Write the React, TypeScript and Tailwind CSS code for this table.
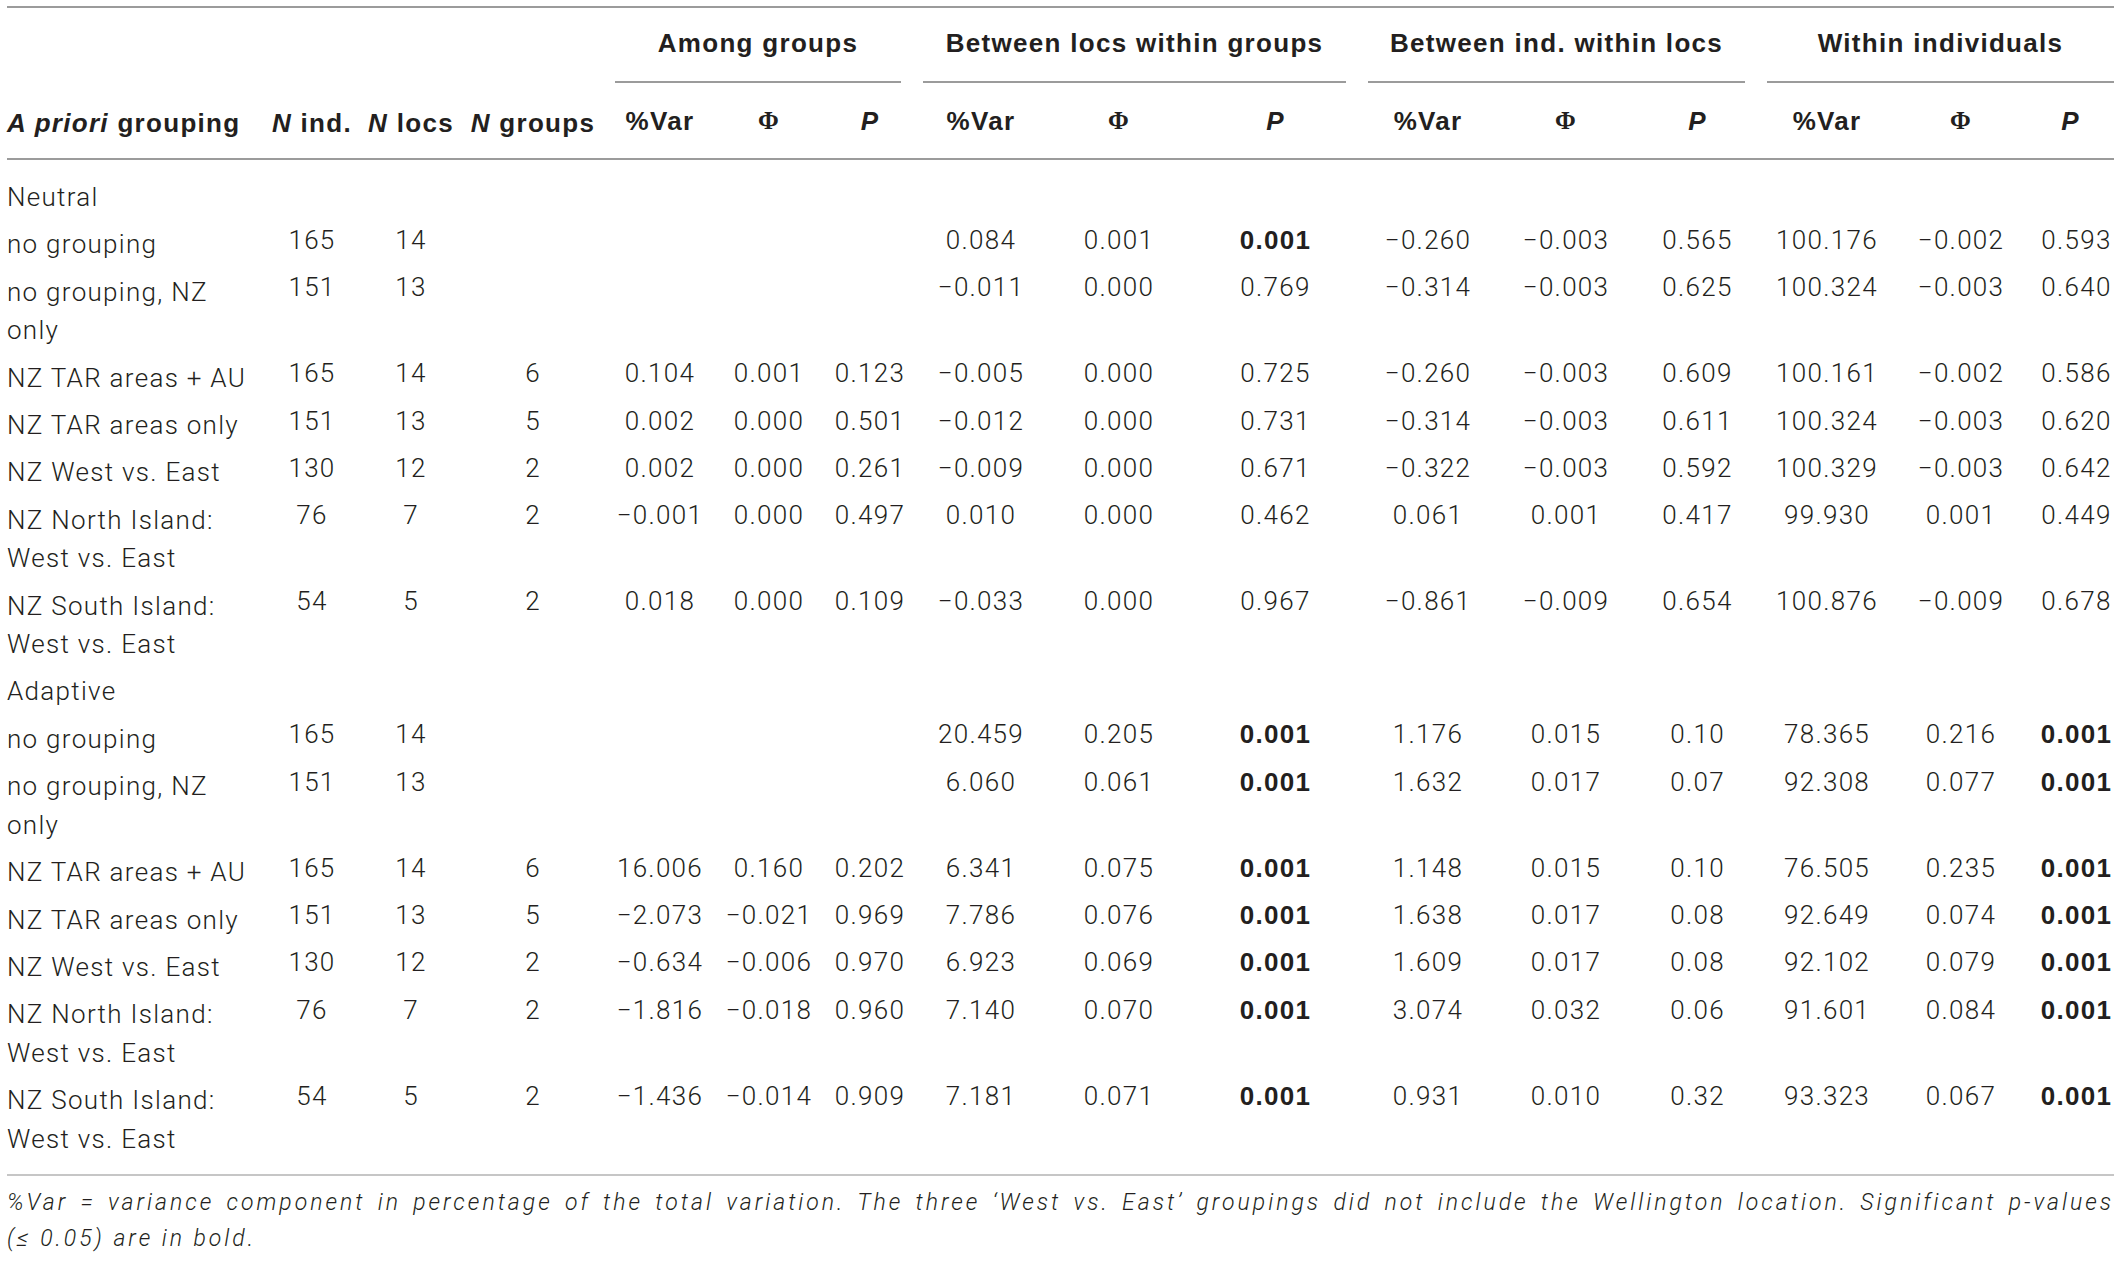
import React from 'react'

type Row = { label: React.ReactNode; cells: string[] }

// "*" in front of a value marks a significant (bold) p-value
const neutral: Row[] = [
  { label: 'no grouping', cells: ['165', '14', '', '', '', '', '0.084', '0.001', '*0.001', '−0.260', '−0.003', '0.565', '100.176', '−0.002', '0.593'] },
  { label: <>no grouping, NZ<br />only</>, cells: ['151', '13', '', '', '', '', '−0.011', '0.000', '0.769', '−0.314', '−0.003', '0.625', '100.324', '−0.003', '0.640'] },
  { label: 'NZ TAR areas + AU', cells: ['165', '14', '6', '0.104', '0.001', '0.123', '−0.005', '0.000', '0.725', '−0.260', '−0.003', '0.609', '100.161', '−0.002', '0.586'] },
  { label: 'NZ TAR areas only', cells: ['151', '13', '5', '0.002', '0.000', '0.501', '−0.012', '0.000', '0.731', '−0.314', '−0.003', '0.611', '100.324', '−0.003', '0.620'] },
  { label: 'NZ West vs. East', cells: ['130', '12', '2', '0.002', '0.000', '0.261', '−0.009', '0.000', '0.671', '−0.322', '−0.003', '0.592', '100.329', '−0.003', '0.642'] },
  { label: <>NZ North Island:<br />West vs. East</>, cells: ['76', '7', '2', '−0.001', '0.000', '0.497', '0.010', '0.000', '0.462', '0.061', '0.001', '0.417', '99.930', '0.001', '0.449'] },
  { label: <>NZ South Island:<br />West vs. East</>, cells: ['54', '5', '2', '0.018', '0.000', '0.109', '−0.033', '0.000', '0.967', '−0.861', '−0.009', '0.654', '100.876', '−0.009', '0.678'] },
]

const adaptive: Row[] = [
  { label: 'no grouping', cells: ['165', '14', '', '', '', '', '20.459', '0.205', '*0.001', '1.176', '0.015', '0.10', '78.365', '0.216', '*0.001'] },
  { label: <>no grouping, NZ<br />only</>, cells: ['151', '13', '', '', '', '', '6.060', '0.061', '*0.001', '1.632', '0.017', '0.07', '92.308', '0.077', '*0.001'] },
  { label: 'NZ TAR areas + AU', cells: ['165', '14', '6', '16.006', '0.160', '0.202', '6.341', '0.075', '*0.001', '1.148', '0.015', '0.10', '76.505', '0.235', '*0.001'] },
  { label: 'NZ TAR areas only', cells: ['151', '13', '5', '−2.073', '−0.021', '0.969', '7.786', '0.076', '*0.001', '1.638', '0.017', '0.08', '92.649', '0.074', '*0.001'] },
  { label: 'NZ West vs. East', cells: ['130', '12', '2', '−0.634', '−0.006', '0.970', '6.923', '0.069', '*0.001', '1.609', '0.017', '0.08', '92.102', '0.079', '*0.001'] },
  { label: <>NZ North Island:<br />West vs. East</>, cells: ['76', '7', '2', '−1.816', '−0.018', '0.960', '7.140', '0.070', '*0.001', '3.074', '0.032', '0.06', '91.601', '0.084', '*0.001'] },
  { label: <>NZ South Island:<br />West vs. East</>, cells: ['54', '5', '2', '−1.436', '−0.014', '0.909', '7.181', '0.071', '*0.001', '0.931', '0.010', '0.32', '93.323', '0.067', '*0.001'] },
]

const bold = "font-['Liberation_Sans',sans-serif] font-bold tracking-[0.05em]"
const phi = "font-['Liberation_Serif',serif] font-bold"

function Cells({ cells }: { cells: string[] }) {
  return (
    <>
      {cells.map((c, i) => (
        <td key={i} className={`px-0 text-center align-top ${i === 14 ? 'pl-[12px]' : ''}`}>
          {c.startsWith('*') ? <span className={bold}>{c.slice(1)}</span> : c}
        </td>
      ))}
    </>
  )
}

function Section({ title, rows, first }: { title: string; rows: Row[]; first?: boolean }) {
  return (
    <>
      <tr>
        <td className={`pl-0 align-top py-[4.5px] ${first ? 'pt-[18px]' : ''}`}>{title}</td>
        <td colSpan={15} />
      </tr>
      {rows.map((r, i) => {
        const last = !first && i === rows.length - 1
        return (
          <tr key={i} className={last ? '[&>td]:pb-[16px]' : ''}>
            <td className="pl-0 py-[4.5px] align-top whitespace-nowrap">{r.label}</td>
            <Cells cells={r.cells} />
          </tr>
        )
      })}
    </>
  )
}

export default function App() {
  const widths = ['w-[254px]', 'w-[102px]', 'w-[96px]', 'w-[148px]', 'w-[106px]', 'w-[112px]', 'w-[90px]', 'w-[132px]', 'w-[144px]', 'w-[169px]', 'w-[136px]', 'w-[140px]', 'w-[123px]', 'w-[136px]', 'w-[132px]', 'w-[87px]']
  const sub = (
    <>
      <th className={`text-center ${bold}`}>%Var</th>
      <th className={`text-center text-[25px] ${phi}`}>Φ</th>
      <th className={`text-center italic ${bold}`}>P</th>
    </>
  )
  return (
    <div className="min-h-screen bg-white pt-[6px] text-[#231f20]">
      <table className="ml-[7px] w-[2107px] table-fixed border-collapse font-['Roboto',sans-serif] text-[26px] font-light leading-[38.4px] tracking-[0.05em]">
        <colgroup>
          {widths.map((w, i) => (
            <col key={i} className={w} />
          ))}
        </colgroup>
        <thead>
          <tr className="border-t-[2px] border-[#9b9b9b]">
            <th colSpan={4} className="h-[76px]" />
            {['Among groups', 'Between locs within groups', 'Between ind. within locs', 'Within individuals'].map((g, i) => (
              <th key={g} colSpan={3} className={`p-0 align-bottom ${i === 3 ? 'pl-[8px]' : 'pl-[8px] pr-[14px]'}`}>
                <div className={`border-b-[2px] border-[#9b9b9b] pb-[18px] text-center leading-[40px] ${bold}`}>{g}</div>
              </th>
            ))}
          </tr>
          <tr className="border-b-[2px] border-[#9b9b9b] leading-[40px]">
            <th className={`h-[76px] pt-[4px] text-left ${bold}`}>
              <i>A priori</i> grouping
            </th>
            <th className={`pt-[4px] text-center ${bold}`}>
              <i>N</i> ind.
            </th>
            <th className={`pt-[4px] text-center ${bold}`}>
              <i>N</i> locs
            </th>
            <th className={`pt-[4px] text-center ${bold}`}>
              <i>N</i> groups
            </th>
            {sub}
            {sub}
            {sub}
            {sub}
          </tr>
        </thead>
        <tbody className="border-b-[2px] border-[#c6c6c6]">
          <Section title="Neutral" rows={neutral} first />
          <Section title="Adaptive" rows={adaptive} />
        </tbody>
      </table>
      <div className="ml-[7px] w-[2107px] pt-[9px] font-['Roboto',sans-serif] text-[23px] font-light italic leading-[36px] tracking-[0.13em]">
        <p className="whitespace-nowrap text-justify [text-align-last:justify]">
          %Var = variance component in percentage of the total variation. The three ‘West vs. East’ groupings did not include the Wellington location. Significant p-values
        </p>
        <p>(≤ 0.05) are in bold.</p>
      </div>
    </div>
  )
}
